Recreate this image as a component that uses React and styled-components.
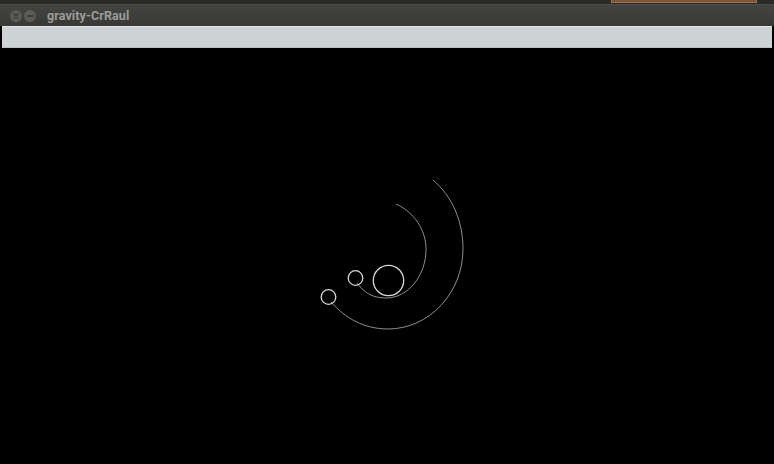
import React from "react";
import styled, { createGlobalStyle } from "styled-components";

const Global = createGlobalStyle`
  html, body { margin: 0; padding: 0; background: #000; }
  body { width: 774px; height: 464px; overflow: hidden; font-family: "Liberation Sans", Arial, sans-serif; }
  #root { width: 774px; height: 464px; }
`;

const Screen = styled.div`
  width: 774px;
  height: 464px;
  display: flex;
  flex-direction: column;
  background: #000;
`;

const TopStrip = styled.div`
  height: 4px;
  background: #2a2a28;
  display: flex;
  justify-content: flex-end;
  padding-right: 17px;
`;

const PanelTab = styled.div`
  width: 144px;
  height: 2px;
  background: #7b5637;
  border: 1px solid #9a7552;
  border-top: none;
  box-sizing: content-box;
`;

const TitleBar = styled.div`
  height: 21px;
  background: linear-gradient(#434441, #393a37);
  border-top: 1px solid #4b4c49;
  display: flex;
  align-items: center;
  padding-left: 10px;
  gap: 2px;
`;

const WinButton = styled.div`
  width: 12px;
  height: 12px;
  border-radius: 50%;
  background: #5a5c5a;
  display: flex;
  align-items: center;
  justify-content: center;
`;

const Title = styled.span`
  margin-left: 9px;
  font-family: Roboto, "Liberation Sans", sans-serif;
  font-weight: bold;
  font-size: 12.5px;
  color: #9c9d99;
  letter-spacing: 0.1px;
`;

const MenuBar = styled.div`
  height: 20px;
  margin: 0 2px;
  background: #cdd3d5;
  border-top: 1px solid #e2e6e7;
  border-bottom: 1px solid #b9bfc1;
`;

const Canvas = styled.div`
  flex: 1;
  background: #000;
  position: relative;
`;

const Scene = styled.svg`
  position: absolute;
  left: 0;
  top: 0;
`;

export default function App() {
  const top = 47;
  return (
    <Screen>
      <Global />
      <TopStrip>
        <PanelTab />
      </TopStrip>
      <TitleBar>
        <WinButton>
          <svg width="6" height="6" viewBox="0 0 6 6">
            <path d="M1 1 L5 5 M5 1 L1 5" stroke="#363735" strokeWidth="1.4" strokeLinecap="round" />
          </svg>
        </WinButton>
        <WinButton>
          <svg width="7" height="2" viewBox="0 0 7 2">
            <path d="M0.5 1 H6.5" stroke="#363735" strokeWidth="1.4" strokeLinecap="round" />
          </svg>
        </WinButton>
        <Title>gravity-CrRaul</Title>
      </TitleBar>
      <MenuBar />
      <Canvas>
        <Scene width="774" height={464 - top} viewBox={`0 ${top} 774 ${464 - top}`}>
          <g fill="none" stroke="#8e8e8e" strokeWidth="1">
            <path d="M357 282 C365 293, 374 297, 386 297 C408 297, 426 275, 426 248 C426 229, 414 211, 396 203" />
            <path d="M331 301 C345 317, 364 328, 388 328 C429 328, 463 292, 463 248 C463 220, 452 195, 433 179" />
          </g>
          <g fill="none" stroke="#d8d8d8" strokeWidth="1.3">
            <circle cx="388.5" cy="279.5" r="15.2" />
            <circle cx="355.5" cy="277" r="7.3" />
            <circle cx="328.5" cy="296" r="7.3" />
          </g>
        </Scene>
      </Canvas>
    </Screen>
  );
}
